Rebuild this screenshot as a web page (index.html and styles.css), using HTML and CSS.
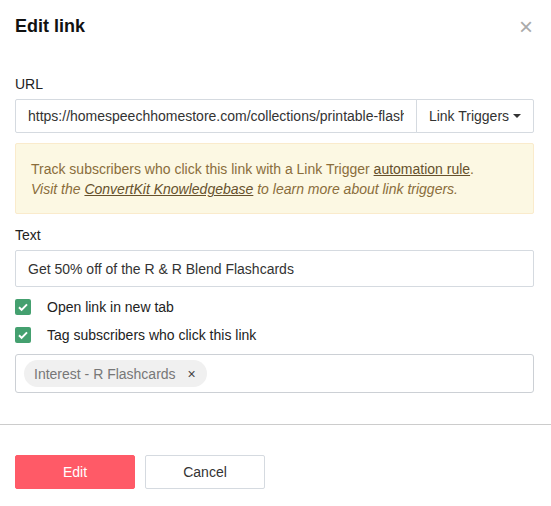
FILE: index.html
```html
<!DOCTYPE html>
<html>
<head>
<meta charset="utf-8">
<link rel="stylesheet" href="styles.css">
</head>
<body>
<div class="modal">
  <div class="header">
    <h2 class="title">Edit link</h2>
    <span class="close">&times;</span>
  </div>
  <div class="body">
    <label class="label">URL</label>
    <div class="input-group">
      <input class="input url" type="text" value="https://homespeechhomestore.com/collections/printable-flashcards">
      <div class="addon">Link Triggers <span class="caret"></span></div>
    </div>
    <div class="alert">
      <p>Track subscribers who click this link with a Link Trigger <a>automation rule</a>.</p>
      <p class="em">Visit the <a>ConvertKit Knowledgebase</a> to learn more about link triggers.</p>
    </div>
    <label class="label">Text</label>
    <input class="input text" type="text" value="Get 50% off of the R &amp; R Blend Flashcards">
    <div class="checks">
      <div class="check"><span class="box"><svg viewBox="0 0 16 16" width="16" height="16"><path d="M4 8.3l2.6 2.6L12 5.4" fill="none" stroke="#fff" stroke-width="2"/></svg></span>Open link in new tab</div>
      <div class="check"><span class="box"><svg viewBox="0 0 16 16" width="16" height="16"><path d="M4 8.3l2.6 2.6L12 5.4" fill="none" stroke="#fff" stroke-width="2"/></svg></span>Tag subscribers who click this link</div>
    </div>
    <div class="tags">
      <span class="tag">Interest - R Flashcards <span class="x">&times;</span></span>
    </div>
  </div>
  <div class="footer">
    <button class="btn primary">Edit</button>
    <button class="btn">Cancel</button>
  </div>
</div>
</body>
</html>
```

FILE: styles.css
```css
* { box-sizing: border-box; }
html, body { margin: 0; padding: 0; background: #fff; }
body {
  font-family: "Liberation Sans", Arial, sans-serif;
  font-size: 14px;
  color: #333;
}
.modal { width: 551px; }
.header {
  display: flex;
  justify-content: space-between;
  align-items: flex-start;
  padding: 15px 18px 0 15px;
  height: 52px;
}
.title {
  margin: 0;
  font-size: 18px;
  font-weight: bold;
  color: #111;
  line-height: 22px;
}
.close {
  font-size: 24px;
  color: #aaa;
  line-height: 24px;
}
.body { padding: 22px 17px 31px 15px; }
.label {
  display: block;
  color: #222;
  line-height: 20px;
  margin-bottom: 5px;
}
.input-group { display: flex; height: 34px; }
.input {
  display: block;
  width: 100%;
  margin: 0;
  border: 1px solid #d5dae0;
  border-radius: 2px;
  padding: 0 12px;
  height: 34px;
  font-family: "Liberation Sans", Arial, sans-serif;
  font-size: 14px;
  color: #333;
  background: #fff;
  outline: none;
}
.url {
  flex: 1;
  min-width: 0;
  border-radius: 2px 0 0 2px;
}
.addon {
  width: 118px;
  flex: none;
  border: 1px solid #d5dae0;
  margin-left: -1px;
  border-radius: 0 2px 2px 0;
  display: flex;
  align-items: center;
  justify-content: center;
  color: #333;
}
.caret {
  display: inline-block;
  width: 0; height: 0;
  margin-left: 4px;
  border-left: 4px solid transparent;
  border-right: 4px solid transparent;
  border-top: 4px solid #333;
}
.alert {
  margin: 10px 0 11px;
  background: #fcf8e3;
  border: 1px solid #faebcc;
  border-radius: 2px;
  padding: 15px;
  color: #8a6d3b;
  height: 71px;
}
.alert p { margin: 0; line-height: 20px; }
.alert a { text-decoration: underline; color: #66512c; }
.alert .em { font-style: italic; }
.text { height: 37px; }
.checks { margin-top: 12px; }
.check {
  display: flex;
  align-items: center;
  height: 16px;
  margin-bottom: 12px;
  color: #222;
}
.check:last-child { margin-bottom: 0; }
.box {
  width: 16px; height: 16px;
  background: #44a06f;
  border-radius: 2px;
  margin-right: 16px;
  display: flex;
}
.tags {
  margin-top: 11px;
  border: 1px solid #ccd0d5;
  border-radius: 3px;
  height: 39px;
  padding: 5px 8px;
}
.tag {
  display: inline-flex;
  align-items: center;
  height: 27px;
  background: #f0f0f0;
  border-radius: 14px;
  padding: 0 11px 0 10px;
  color: #777;
}
.tag .x {
  margin-left: 12px;
  color: #444;
  font-size: 14px;
}
.footer {
  border-top: 1px solid #ccc;
  padding: 30px 15px 20px;
  display: flex;
  gap: 10px;
}
.btn {
  width: 120px;
  height: 34px;
  font-family: "Liberation Sans", Arial, sans-serif;
  font-size: 14px;
  border: 1px solid #d5dae0;
  border-radius: 2px;
  background: #fff;
  color: #333;
  padding: 0;
}
.btn.primary {
  background: #ff5a67;
  border-color: #ff5a67;
  color: #fff;
}
```
